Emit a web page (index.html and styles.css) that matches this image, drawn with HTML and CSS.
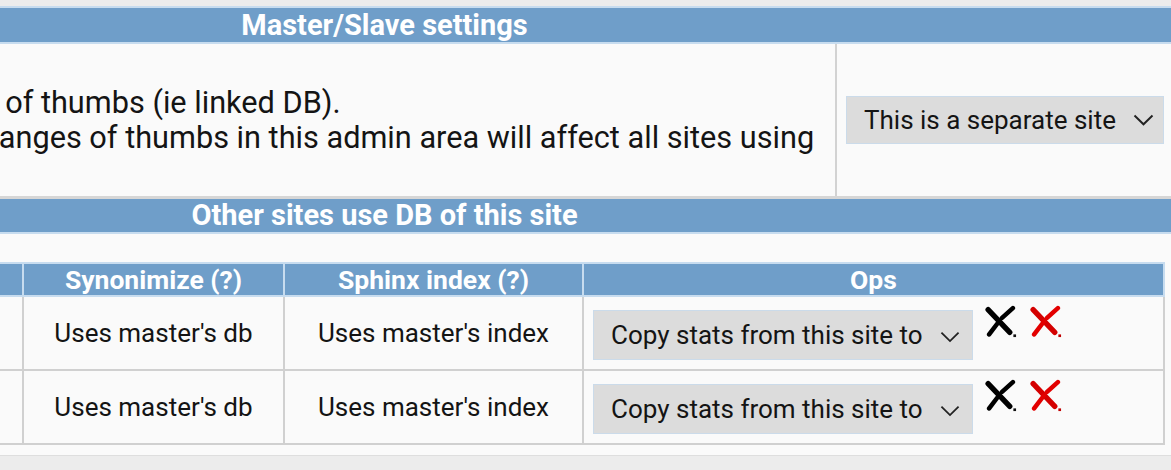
FILE: index.html
```html
<!DOCTYPE html>
<html lang="en">
<head>
<meta charset="utf-8">
<title>Master/Slave settings</title>
<link rel="stylesheet" href="styles.css">
</head>
<body>
<div class="panel">
  <div class="section-head first">Master/Slave settings</div>
  <div class="setting-row">
    <div class="setting-text">
      <div>Uses a database of thumbs (ie linked DB).</div>
      <div>Be careful: All changes of thumbs in this admin area will affect all sites using</div>
    </div>
    <div class="setting-control">
      <div class="select-wrap wide">
        <select class="select"><option>This is a separate site</option></select>
        <svg class="chev" viewBox="0 0 21 12" width="21" height="12"><path d="M1.5 1.5 L10.5 10.3 L19.5 1.5" fill="none" stroke="#222" stroke-width="1.9"/></svg>
      </div>
    </div>
  </div>
  <div class="section-head second">Other sites use DB of this site</div>
  <table class="sites">
    <colgroup>
      <col class="c-site"><col class="c-syn"><col class="c-sphinx"><col class="c-ops">
    </colgroup>
    <thead>
      <tr><th>Site</th><th>Synonimize (?)</th><th>Sphinx index (?)</th><th>Ops</th></tr>
    </thead>
    <tbody>
      <tr>
        <td>slave-one.example</td>
        <td>Uses master's db</td>
        <td>Uses master's index</td>
        <td class="ops">
          <div class="ops-inner">
            <div class="select-wrap narrow">
              <select class="select"><option>Copy stats from this site to</option></select>
              <svg class="chev" viewBox="0 0 21 12" width="20" height="12"><path d="M1.5 1.5 L10.5 10.3 L19.5 1.5" fill="none" stroke="#222" stroke-width="1.9"/></svg>
            </div>
            <svg class="icon-x" viewBox="0 0 32 32" width="34" height="33"><path d="M3.5 4.5 L24.5 26.5" stroke="#000" stroke-width="5.2" stroke-linecap="round"/><path d="M27.5 3 L17 12.5 M14 16 L4.5 28.5" stroke="#000" stroke-width="4.4" stroke-linecap="round"/><rect x="28" y="28.5" width="2.6" height="2.6" fill="#111"/></svg>
            <svg class="icon-x red" viewBox="0 0 32 32" width="34" height="33"><path d="M3.5 4.5 L24.5 26.5" stroke="#d40000" stroke-width="5.2" stroke-linecap="round"/><path d="M27.5 3 L17 12.5 M14 16 L4.5 28.5" stroke="#e30000" stroke-width="4.4" stroke-linecap="round"/><rect x="28" y="28.5" width="2.6" height="2.6" fill="#c00000"/></svg>
          </div>
        </td>
      </tr>
      <tr>
        <td>slave-two.example</td>
        <td>Uses master's db</td>
        <td>Uses master's index</td>
        <td class="ops">
          <div class="ops-inner">
            <div class="select-wrap narrow">
              <select class="select"><option>Copy stats from this site to</option></select>
              <svg class="chev" viewBox="0 0 21 12" width="20" height="12"><path d="M1.5 1.5 L10.5 10.3 L19.5 1.5" fill="none" stroke="#222" stroke-width="1.9"/></svg>
            </div>
            <svg class="icon-x" viewBox="0 0 32 32" width="34" height="33"><path d="M3.5 4.5 L24.5 26.5" stroke="#000" stroke-width="5.2" stroke-linecap="round"/><path d="M27.5 3 L17 12.5 M14 16 L4.5 28.5" stroke="#000" stroke-width="4.4" stroke-linecap="round"/><rect x="28" y="28.5" width="2.6" height="2.6" fill="#111"/></svg>
            <svg class="icon-x red" viewBox="0 0 32 32" width="34" height="33"><path d="M3.5 4.5 L24.5 26.5" stroke="#d40000" stroke-width="5.2" stroke-linecap="round"/><path d="M27.5 3 L17 12.5 M14 16 L4.5 28.5" stroke="#e30000" stroke-width="4.4" stroke-linecap="round"/><rect x="28" y="28.5" width="2.6" height="2.6" fill="#c00000"/></svg>
          </div>
        </td>
      </tr>
    </tbody>
  </table>
</div>
</body>
</html>
```

FILE: styles.css
```css
html, body {
  margin: 0;
  padding: 0;
  overflow: hidden;
}
body {
  background: #ececec;
  font-family: Roboto, "Liberation Sans", sans-serif;
  color: #141414;
  width: 1171px;
  height: 470px;
}
.panel {
  margin-top: 6px;
  margin-left: -410px;
  width: 1589px;
  background: #fafafa;
  padding-bottom: 10px;
  border-bottom: 1px solid #dedede;
}
.section-head {
  background: #6f9ec9;
  color: #fff;
  font-weight: 700;
  font-size: 29px;
  text-align: center;
  height: 33px;
  line-height: 33px;
  border-bottom: 2px solid #c7dcef;
}
.section-head.first {
  border-top: 2px solid #c7dcef;
  height: 34px;
  line-height: 34px;
}
.setting-row {
  display: flex;
  height: 152px;
  border-bottom: 3px solid #d6d6d6;
}
.setting-text {
  width: 1247px;
  flex: none;
  padding-left: 181px;
  box-sizing: border-box;
  border-right: 2px solid #d2d2d2;
  font-size: 30.7px;
  line-height: 35px;
  display: flex;
  flex-direction: column;
  justify-content: center;
  white-space: nowrap;
  overflow: hidden;
}
.setting-control {
  flex: 1;
  display: flex;
  align-items: center;
  padding-left: 9px;
}
.select-wrap {
  position: relative;
  flex: none;
}
.select {
  appearance: none;
  -webkit-appearance: none;
  display: block;
  box-sizing: border-box;
  margin: 0;
  background: #dcdcdc;
  border: 1px solid #cbdbea;
  border-radius: 0;
  color: #141414;
  font-family: Roboto, "Liberation Sans", sans-serif;
  font-size: 26px;
  padding: 0 40px 0 17px;
  outline: none;
}
.wide .select {
  width: 318px;
  height: 48px;
}
.narrow .select {
  width: 380px;
  height: 50px;
}
.chev {
  position: absolute;
  top: 50%;
  pointer-events: none;
}
.wide .chev {
  right: 10px;
  margin-top: -6px;
}
.narrow .chev {
  right: 13px;
  margin-top: -4px;
}
.sites {
  margin-left: 110px;
  width: 1463px;
  border-collapse: collapse;
  table-layout: fixed;
  font-size: 26px;
  margin-top: 28px;
}
.c-site { width: 322px; }
.c-syn { width: 261px; }
.c-sphinx { width: 299px; }
.c-ops { width: 581px; }
.sites th {
  background: #6f9ec9;
  color: #fff;
  font-weight: 700;
  font-size: 26.5px;
  height: 31px;
  line-height: 31px;
  padding: 0;
  border: 2px solid #c7dcef;
}
.sites td {
  border: 2px solid #d0d0d0;
  height: 72px;
  padding: 0;
  text-align: center;
  vertical-align: middle;
  white-space: nowrap;
  overflow: hidden;
}
.sites td.ops {
  text-align: left;
  vertical-align: top;
}
.ops-inner {
  display: flex;
  align-items: flex-start;
  padding: 9px 9px 0;
}
.ops-inner .select-wrap {
  margin-top: 4px;
}
.icon-x {
  flex: none;
  margin-left: 11px;
  margin-top: -1px;
}
.icon-x.red {
  margin-left: 11px;
}
```
